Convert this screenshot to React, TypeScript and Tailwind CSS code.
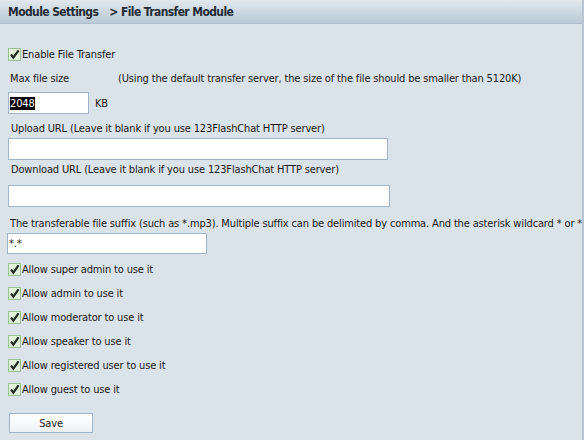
import React from "react";

function Check({ label }: { label: string }) {
  return (
    <div className="flex items-center h-[14px]">
      <span className="relative w-[13px] h-[13px] border border-[#9cc096] bg-[#e2f1da] shrink-0">
        <svg viewBox="0 0 13 13" className="absolute -left-px -top-px w-[13px] h-[13px]">
          <path d="M3 6.5 L5.3 9.6 L10.6 2.4" fill="none" stroke="#1e2b1e" strokeWidth="2.2" />
        </svg>
      </span>
      <span className="ml-px leading-[13px]">{label}</span>
    </div>
  );
}

export default function App() {
  return (
    <div
      className="w-[584px] h-[440px] bg-[#dae2ea] text-[11px] leading-[13px] text-[#1a1a1a] border-r-2 border-[#b8c4d0] overflow-hidden tracking-[-0.15px]"
      style={{ fontFamily: '"DejaVu Sans Condensed", "DejaVu Sans", Tahoma, sans-serif' }}
    >
      <div className="h-[24px] bg-gradient-to-b from-[#e1e8ee] to-[#b9c9d5] border-b border-[#aebccb] flex items-center pl-[8px] pt-px text-[12px] font-bold text-[#232c36] tracking-[-0.6px]">
        <span>Module Settings</span>
        <span className="ml-[11px]">&gt; File Transfer Module</span>
      </div>
      <div className="pl-[8px] pt-[23px]">
        <Check label="Enable File Transfer" />
        <div className="flex mt-[11px] pl-[2px]">
          <span className="w-[108px]">Max file size</span>
          <span>(Using the default transfer server, the size of the file should be smaller than 5120K)</span>
        </div>
        <div className="flex items-center mt-[7px]">
          <div className="w-[81px] h-[22px] bg-white border border-[#9fb4c8] flex items-center pl-[1px]">
            <span className="bg-black text-white leading-[13px]">2048</span>
          </div>
          <span className="ml-[6px]">KB</span>
        </div>
        <div className="mt-[8px] pl-[3px]">Upload URL (Leave it blank if you use 123FlashChat HTTP server)</div>
        <div className="w-[380px] h-[22px] bg-white border border-[#9fb4c8] mt-[3px]" />
        <div className="mt-[3px] pl-[3px]">Download URL (Leave it blank if you use 123FlashChat HTTP server)</div>
        <div className="w-[382px] h-[22px] bg-white border border-[#9fb4c8] mt-[9px]" />
        <div className="mt-[10px] pl-[2px] whitespace-nowrap">
          The transferable file suffix (such as *.mp3). Multiple suffix can be delimited by comma. And the asterisk wildcard * or *.*
        </div>
        <div className="w-[200px] h-[21px] bg-white border border-[#9fb4c8] mt-[3px] -ml-px flex items-center pl-[1px]">*.*</div>
        <div className="flex flex-col gap-[10px] mt-[8px]">
          <Check label="Allow super admin to use it" />
          <Check label="Allow admin to use it" />
          <Check label="Allow moderator to use it" />
          <Check label="Allow speaker to use it" />
          <Check label="Allow registered user to use it" />
          <Check label="Allow guest to use it" />
        </div>
        <button className="mt-[17px] ml-px w-[84px] h-[20px] bg-gradient-to-b from-white to-[#eef2f5] border border-[#9fb4c8] text-[11px] leading-[13px] text-[#1a1a1a]">
          Save
        </button>
      </div>
    </div>
  );
}
